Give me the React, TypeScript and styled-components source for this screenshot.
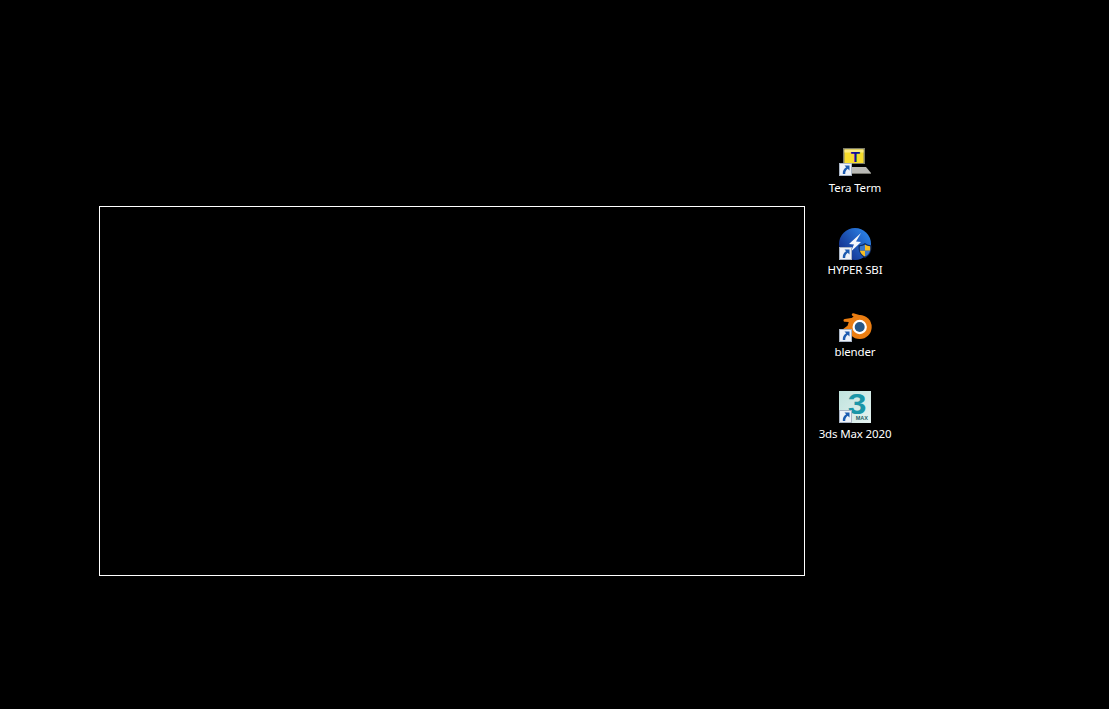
import React from 'react';
import styled, { createGlobalStyle } from 'styled-components';

const GlobalStyle = createGlobalStyle`
  html, body {
    margin: 0;
    padding: 0;
    background: #000;
  }
`;

const Desktop = styled.div`
  display: flex;
  align-items: flex-start;
  width: 1109px;
  height: 709px;
  padding: 146px 0 0 99px;
  box-sizing: border-box;
  background: #000;
  overflow: hidden;
`;

const Frame = styled.div`
  width: 706px;
  height: 370px;
  margin-top: 60px;
  box-sizing: border-box;
  border: 1px solid #fff;
`;

const IconColumn = styled.ul`
  display: flex;
  flex-direction: column;
  width: 100px;
  margin: 0;
  padding: 0;
  list-style: none;
`;

const Shortcut = styled.li`
  display: flex;
  flex-direction: column;
  align-items: center;
  height: 82px;
`;

// $shift: the pictures don't sit on the same line inside their cell
const IconBox = styled.div<{ $shift: number }>`
  position: relative;
  width: 32px;
  height: 32px;
  margin-top: ${(p) => p.$shift}px;
  margin-bottom: ${(p) => -p.$shift}px;
`;

const Label = styled.span`
  margin-top: 1px;
  font-family: 'Noto Sans', 'Open Sans', sans-serif;
  font-size: 11.5px;
  line-height: 17px;
  letter-spacing: -0.15px;
  color: #fff;
  white-space: nowrap;
`;

const ArrowBadge = styled.svg<{ $top: number }>`
  position: absolute;
  left: 0;
  top: ${(p) => p.$top}px;
  width: 13px;
  height: 13px;
`;

const Glyph = styled.svg`
  display: block;
  width: 32px;
  height: 32px;
  overflow: visible;
`;

const MaxTile = styled.div`
  width: 32px;
  height: 32px;
  padding: 3px 0 0 9px;
  box-sizing: border-box;
  background: linear-gradient(135deg, #bfe3dd, #e6f3f1);
`;

const MaxNumeral = styled.div`
  width: 18px;
  font-family: 'Liberation Sans', sans-serif;
  font-size: 30px;
  font-weight: 700;
  line-height: 20px;
  text-align: center;
  color: #1a96a8;
  transform: scaleX(1.12);
`;

const MaxMark = styled.span`
  position: absolute;
  right: 3px;
  bottom: 2px;
  font-family: 'Liberation Sans', sans-serif;
  font-size: 5.5px;
  font-weight: 700;
  line-height: 6px;
  color: #1e5f66;
`;

const ShortcutArrow = ({ top }: { top: number }) => (
  <ArrowBadge $top={top} viewBox="0 0 13 13">
    <rect x="0.5" y="0.5" width="12" height="12" fill="#eef2f8" stroke="#a9b4c4" strokeWidth="1" />
    <path
      d="M5.5 2.5 H10.5 V7.5 L8.7 5.7 C7 7 6.2 8.5 6.2 11 H3.8 C3.6 7.8 4.8 5.5 7.2 4.2 Z"
      fill="#1c5bb0"
    />
  </ArrowBadge>
);

const TeraTermIcon = () => (
  <Glyph viewBox="0 0 32 32">
    <rect x="4" y="0" width="22" height="16" fill="#7c7c68" />
    <rect x="5.5" y="1.5" width="19" height="13.5" fill="#f7dc2c" />
    <rect x="5.5" y="1.5" width="19" height="3" fill="#fbeb80" />
    <path d="M13 19 H27 L32 25 V26 H13 Z" fill="#b9b9b5" />
    <rect x="13" y="25" width="19" height="1" fill="#77776f" />
    <text
      x="16.4"
      y="14"
      textAnchor="middle"
      fontFamily="'Liberation Sans', sans-serif"
      fontWeight="700"
      fontSize="15"
      fill="#10109a"
    >
      T
    </text>
  </Glyph>
);

const HyperSbiIcon = () => (
  <Glyph viewBox="0 0 32 32">
    <defs>
      <linearGradient id="sbiBlue" x1="0.1" y1="0.8" x2="0.9" y2="0.2">
        <stop offset="0" stopColor="#122f8c" />
        <stop offset="1" stopColor="#2a7fe4" />
      </linearGradient>
    </defs>
    <circle cx="16" cy="16" r="16" fill="url(#sbiBlue)" />
    <path d="M22 5 L10 16 L15 16.5 L11.5 24 L22 14 L17 13.5 Z" fill="#f4f7fc" />
    <path d="M26 15 C24 16.8 22 17.2 19.6 17.2 C19 23 21.5 27.8 26 30 C30.5 27.8 33 23 32.4 17.2 C30 17.2 28 16.8 26 15 Z" fill="#0d2a63" />
    <path d="M26 16.6 V22.8 H20.9 C20.7 21 20.7 19.6 20.9 18.3 C22.8 18.3 24.5 17.8 26 16.6 Z" fill="#3a78c8" />
    <path d="M26 16.6 C27.5 17.8 29.2 18.3 31.1 18.3 C31.3 19.6 31.3 21 31.1 22.8 H26 Z" fill="#f5bd22" />
    <path d="M26 22.8 V28.6 C23.5 27.4 21.6 25.4 20.9 22.8 Z" fill="#f5bd22" />
    <path d="M26 22.8 H31.1 C30.4 25.4 28.5 27.4 26 28.6 Z" fill="#3a78c8" />
  </Glyph>
);

const BlenderIcon = () => (
  <Glyph viewBox="0 0 32 32">
    <circle cx="20.7" cy="17" r="12" fill="#ea7d12" />
    <path
      d="M22 5.5 L14.5 3.2 C12.8 2.9 12.2 4.9 13.4 5.7 L15.5 7.5 L5.8 8.9 C4 9.3 4.2 11.7 6 11.7 L13 12.2 L4.2 19 C3 20 4 21.8 5.6 21 L12 18 Z"
      fill="#ea7d12"
    />
    <circle cx="20.7" cy="17" r="7.2" fill="#fff" />
    <circle cx="20.7" cy="17" r="5" fill="#265787" />
  </Glyph>
);

const MaxIcon = () => (
  <MaxTile>
    <MaxNumeral>3</MaxNumeral>
    <MaxMark>MAX</MaxMark>
  </MaxTile>
);

const shortcuts = [
  { name: 'Tera Term', icon: <TeraTermIcon />, shift: 2, badge: 15 },
  { name: 'HYPER SBI', icon: <HyperSbiIcon />, shift: 0, badge: 19 },
  { name: 'blender', icon: <BlenderIcon />, shift: 0, badge: 19 },
  { name: '3ds Max 2020', icon: <MaxIcon />, shift: -1, badge: 19 },
];

const App = () => {
  return (
    <Desktop>
      <GlobalStyle />
      <Frame />
      <IconColumn>
        {shortcuts.map((s) => (
          <Shortcut key={s.name}>
            <IconBox $shift={s.shift}>
              {s.icon}
              <ShortcutArrow top={s.badge} />
            </IconBox>
            <Label>{s.name}</Label>
          </Shortcut>
        ))}
      </IconColumn>
    </Desktop>
  );
};

export default App;
